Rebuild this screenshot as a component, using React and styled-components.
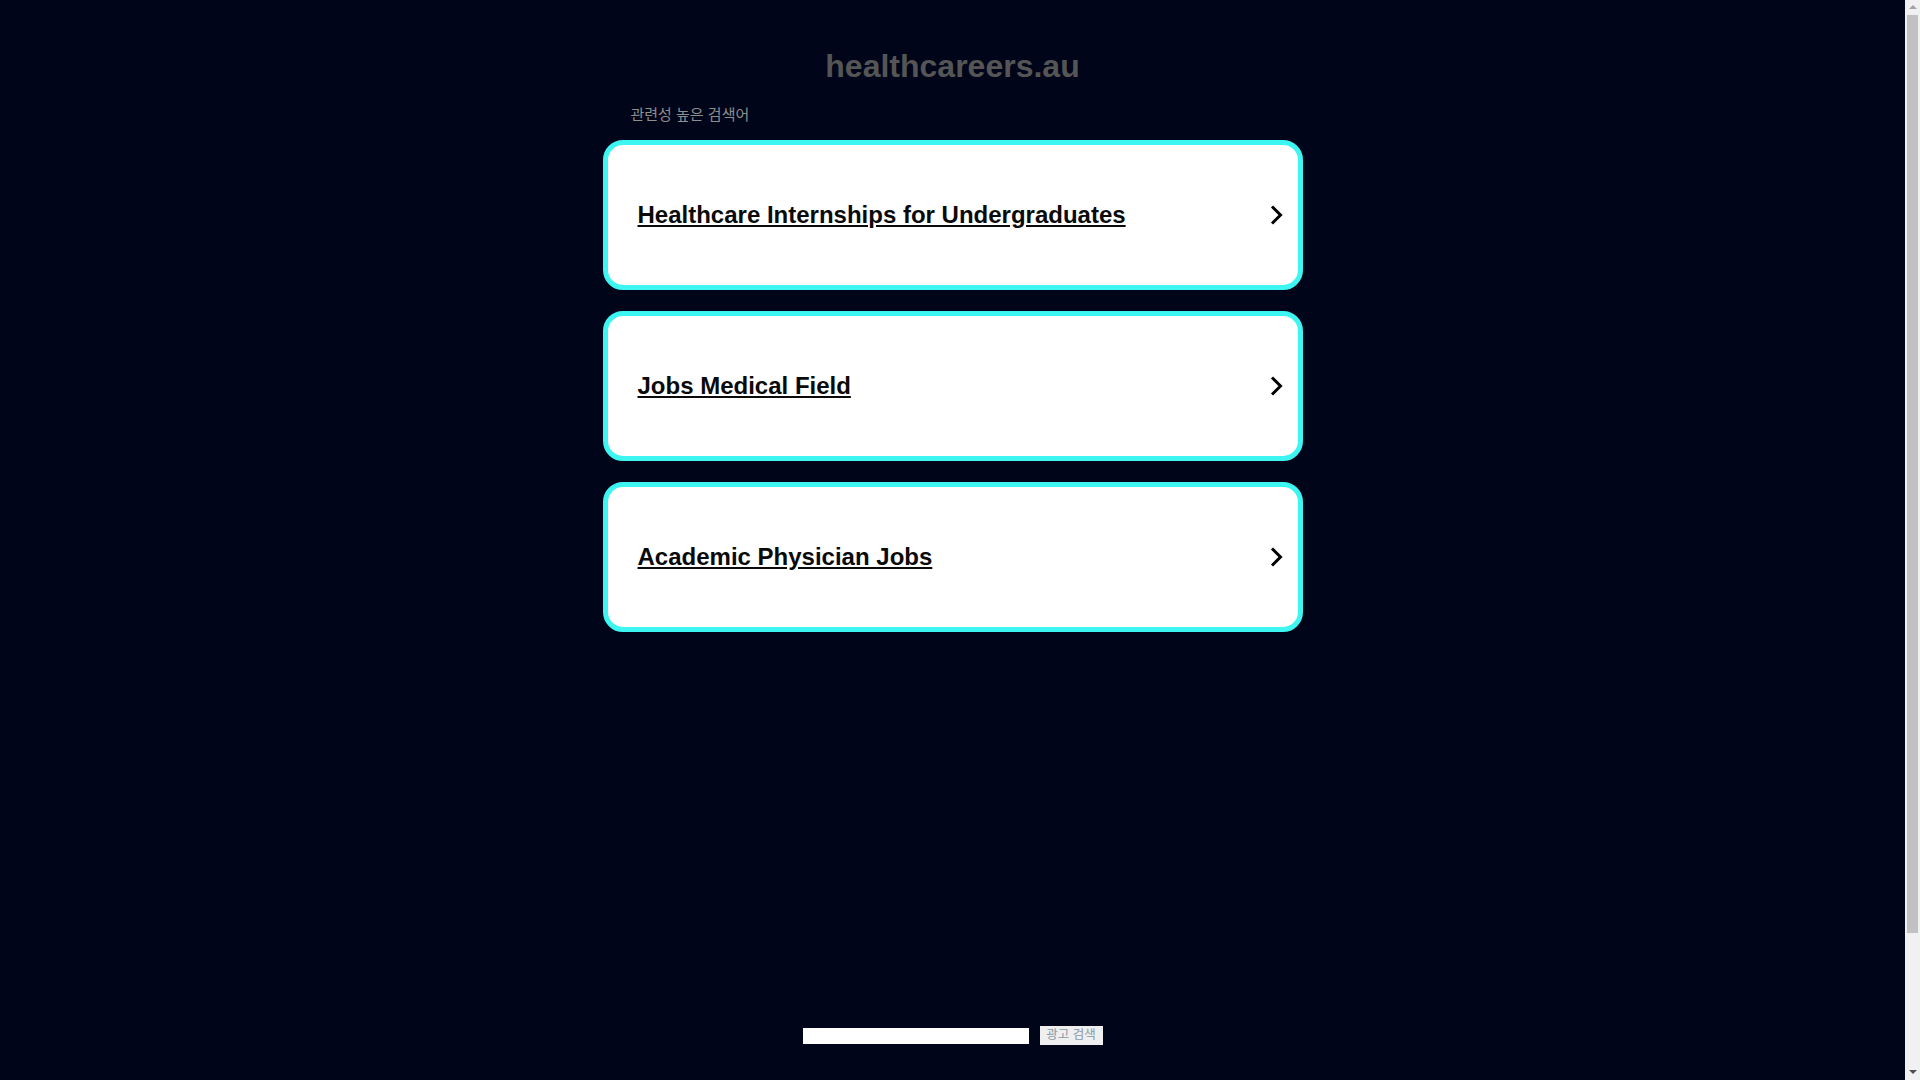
import React from "react";
import styled, { createGlobalStyle } from "styled-components";

const terms = [
  "Healthcare Internships for Undergraduates",
  "Jobs Medical Field",
  "Academic Physician Jobs",
];

export default function App() {
  return (
    <Page>
      <GlobalStyle />
      <Domain>healthcareers.au</Domain>
      <Results>
        <Label>관련성 높은 검색어</Label>
        {terms.map((term) => (
          <Card key={term} href="#">
            <Term>{term}</Term>
            <Chevron width="14" height="24" viewBox="0 0 14 24">
              <polyline
                points="2,3.5 10.5,12 2,20.5"
                fill="none"
                stroke="#000"
                strokeWidth="3"
              />
            </Chevron>
          </Card>
        ))}
      </Results>
      <SearchForm onSubmit={(e) => e.preventDefault()}>
        <SearchInput type="text" />
        <SearchButton type="submit">광고 검색</SearchButton>
      </SearchForm>
      {/* window scrollbar, as it shows in the screenshot */}
      <Scrollbar>
        <Arrow $up />
        <Thumb />
        <Arrow />
      </Scrollbar>
    </Page>
  );
}

const GlobalStyle = createGlobalStyle`
  body {
    margin: 0;
    background: #000519;
    font-family: "Liberation Sans", Arial, "Noto Sans CJK KR", sans-serif;
  }
`;

const Page = styled.div`
  min-height: 1235px;
  margin-right: 15px;
  padding-top: 48px;
  box-sizing: border-box;
`;

const Domain = styled.h1`
  margin: 0;
  text-align: center;
  font-size: 32px;
  font-weight: bold;
  color: #555;
`;

const Results = styled.div`
  width: 700px;
  margin: 20px auto 0;
  padding-bottom: 21px;
`;

const Label = styled.div`
  padding-left: 28px;
  margin-bottom: 15px;
  font-size: 15px;
  line-height: 20px;
  color: #8e8e8e;
`;

const Card = styled.a`
  display: flex;
  align-items: center;
  justify-content: space-between;
  height: 150px;
  box-sizing: border-box;
  margin-bottom: 21px;
  padding: 0 14px 0 30px;
  background: #fff;
  border: 5px solid #3df5f1;
  border-radius: 20px;
  text-decoration: none;

  &:last-of-type {
    margin-bottom: 0;
  }
`;

const Term = styled.span`
  font-size: 24px;
  font-weight: bold;
  color: #0a0a0a;
  text-decoration: underline;
`;

const Chevron = styled.svg`
  flex-shrink: 0;
`;

const SearchForm = styled.form`
  display: flex;
  align-items: center;
  justify-content: center;
  gap: 11px;
  margin-top: 373px;
`;

const SearchInput = styled.input`
  width: 226px;
  height: 16px;
  padding: 0;
  border: none;
  background: #fff;
`;

const SearchButton = styled.button`
  width: 63px;
  height: 19px;
  padding: 0;
  border: none;
  background: #efefef;
  color: #8898a8;
  font-family: "Liberation Sans", Arial, "Noto Sans CJK KR", sans-serif;
  font-size: 12.5px;
  line-height: 19px;
`;

const Scrollbar = styled.div`
  position: fixed;
  top: 0;
  right: 0;
  bottom: 0;
  width: 15px;
  display: flex;
  flex-direction: column;
  align-items: center;
  background: #f1f1f1;
`;

const Arrow = styled.div`
  width: 0;
  height: 0;
  margin: ${(p) => (p.$up ? "5px 0 4px" : "auto 0 6px")};
  border-left: 4px solid transparent;
  border-right: 4px solid transparent;
  ${(p) =>
    p.$up ? "border-bottom: 4px solid #a3a3a3;" : "border-top: 4px solid #505050;"}
`;

const Thumb = styled.div`
  width: 11px;
  height: 918px;
  margin-top: 2px;
  background: #c1c1c1;
`;
